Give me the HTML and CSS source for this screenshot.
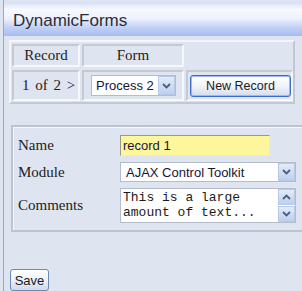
FILE: index.html
```html
<!DOCTYPE html>
<html lang="en">
<head>
    <meta charset="UTF-8">
    <title>DynamicForms</title>
    <link rel="stylesheet" href="styles.css">
</head>
<body>
    <div id="frame">
        <div id="header">DynamicForms</div>

        <div id="nav">
            <div class="cell head">Record</div>
            <div class="cell head">Form</div>
            <div></div>
            <div class="cell pager">1 of 2 &gt;</div>
            <div class="cell">
                <div class="select form-select">
                    <span class="select-text">Process 2</span>
                    <span class="arrow">
                        <svg width="9" height="6" viewBox="0 0 9 6"><path d="M1 1 L4.5 4.5 L8 1" fill="none" stroke="#4a5d82" stroke-width="1.8"/></svg>
                    </span>
                </div>
            </div>
            <div class="cell">
                <button class="btn new-record">New Record</button>
            </div>
        </div>

        <div id="fields">
            <div class="label">Name</div>
            <div class="row"><div class="input name">record 1</div></div>

            <div class="label">Module</div>
            <div class="row">
                <div class="select module-select">
                    <span class="select-text">AJAX Control Toolkit</span>
                    <span class="arrow">
                        <svg width="9" height="6" viewBox="0 0 9 6"><path d="M1 1 L4.5 4.5 L8 1" fill="none" stroke="#4a5d82" stroke-width="1.8"/></svg>
                    </span>
                </div>
            </div>

            <div class="label">Comments</div>
            <div class="row">
                <div class="textarea">
                    <div class="textarea-text">This is a large<br>amount of text...</div>
                    <div class="scroll">
                        <span class="arrow">
                            <svg width="9" height="6" viewBox="0 0 9 6"><path d="M1 5 L4.5 1.5 L8 5" fill="none" stroke="#4a5d82" stroke-width="1.8"/></svg>
                        </span>
                        <span class="arrow">
                            <svg width="9" height="6" viewBox="0 0 9 6"><path d="M1 1 L4.5 4.5 L8 1" fill="none" stroke="#4a5d82" stroke-width="1.8"/></svg>
                        </span>
                    </div>
                </div>
            </div>
        </div>

        <button class="btn save">Save</button>
    </div>
</body>
</html>
```

FILE: styles.css
```css
html, body {
    height: 100%;
}
body {
    margin: 0;
    padding: 0;
    background-color: #dfe4f1;
    overflow: hidden;
    font-family: "Liberation Sans", Arial, sans-serif;
}
#frame {
    margin-left: 3px;
    border-left: 1px solid #8ea8dc;
    min-height: 100%;
    padding-top: 2px;
    box-sizing: border-box;
}
#header {
    height: 34px;
    padding-left: 9px;
    font-size: 17px;
    line-height: 37px;
    color: #2a2d3a;
    background: linear-gradient(#d6dff7 0%, #f7f9ff 22%, #eef2fd 48%, #c3d1f5 74%, #a7bcf0 100%);
}
#nav {
    display: grid;
    grid-template-columns: 68px 102px 1fr;
    grid-template-rows: 23px 31px;
    gap: 3px 2px;
    margin: 4px 7px 0 5px;
    padding: 2px 1px 1px 1px;
    border: 2px solid;
    border-color: #f3f5fa #c3c7cf #c3c7cf #f3f5fa;
}
.cell {
    display: flex;
    align-items: center;
    border: 2px solid;
    border-color: #c6c9d0 #f5f7fb #f5f7fb #c6c9d0;
    font-family: "Liberation Serif", "Times New Roman", serif;
    font-size: 15px;
    color: #222;
}
.head {
    justify-content: center;
}
.pager {
    padding-left: 8px;
    word-spacing: 2px;
}
.select {
    display: flex;
    align-items: stretch;
    background-color: white;
    border: 1px solid #b4bccb;
    box-sizing: border-box;
    font-family: "Liberation Sans", Arial, sans-serif;
    font-size: 13px;
    color: #15163a;
}
.select-text {
    flex-grow: 1;
    display: flex;
    align-items: center;
    padding-left: 4px;
}
.arrow {
    width: 15px;
    display: flex;
    align-items: center;
    justify-content: center;
    border: 1px solid #b7c9e6;
    background: linear-gradient(#e3ebf8, #bdd0ec);
}
.form-select {
    margin-left: 7px;
    width: 85px;
    height: 21px;
}
.btn {
    font-family: "Liberation Sans", Arial, sans-serif;
    color: #1b1b1b;
    border-radius: 3px;
    padding: 0;
    cursor: pointer;
}
.new-record {
    margin-left: 2px;
    width: 101px;
    height: 22px;
    font-size: 12.5px;
    border: 1px solid #3d6dc6;
    box-shadow: inset 0 0 0 1px #9fb9ea;
    background: linear-gradient(#ffffff, #f1f4fa 50%, #d3ddee);
}
#fields {
    display: grid;
    grid-template-columns: 102px 1fr;
    row-gap: 6px;
    margin: 21px -14px 0 7px;
    padding: 8px 0 7px 5px;
    border: 2px solid #bfc3cb;
    box-shadow: inset 1px 1px 0 #f6f8fc;
}
.label {
    display: flex;
    align-items: center;
    font-family: "Liberation Serif", "Times New Roman", serif;
    font-size: 15px;
    color: #222;
}
.row {
    display: flex;
}
.input {
    box-sizing: border-box;
    height: 21px;
    display: flex;
    align-items: center;
    padding-left: 2px;
    font-size: 13px;
    color: #15163a;
}
.name {
    width: 150px;
    background-color: #fdf69b;
    border: 1px solid;
    border-color: #9a9a8c #f3eeb0 #f3eeb0 #9a9a8c;
}
.module-select {
    width: 176px;
    height: 20px;
}
.module-select .select-text {
    padding-left: 5px;
}
.textarea {
    display: flex;
    width: 176px;
    height: 35px;
    box-sizing: border-box;
    background-color: white;
    border: 1px solid #b4bccb;
}
.textarea-text {
    flex-grow: 1;
    padding: 1px 0 0 2px;
    font-family: "Liberation Mono", "Courier New", monospace;
    font-size: 13px;
    line-height: 15px;
    color: #1b1b1b;
}
.scroll {
    display: flex;
    flex-direction: column;
    gap: 1px;
}
.scroll .arrow {
    flex-grow: 1;
}
.save {
    display: block;
    margin: 37px 0 0 6px;
    width: 39px;
    height: 22px;
    font-size: 13px;
    border: 1px solid #6f88b6;
    background: linear-gradient(#ffffff, #eef1f7 50%, #cfd8e8);
}
```
